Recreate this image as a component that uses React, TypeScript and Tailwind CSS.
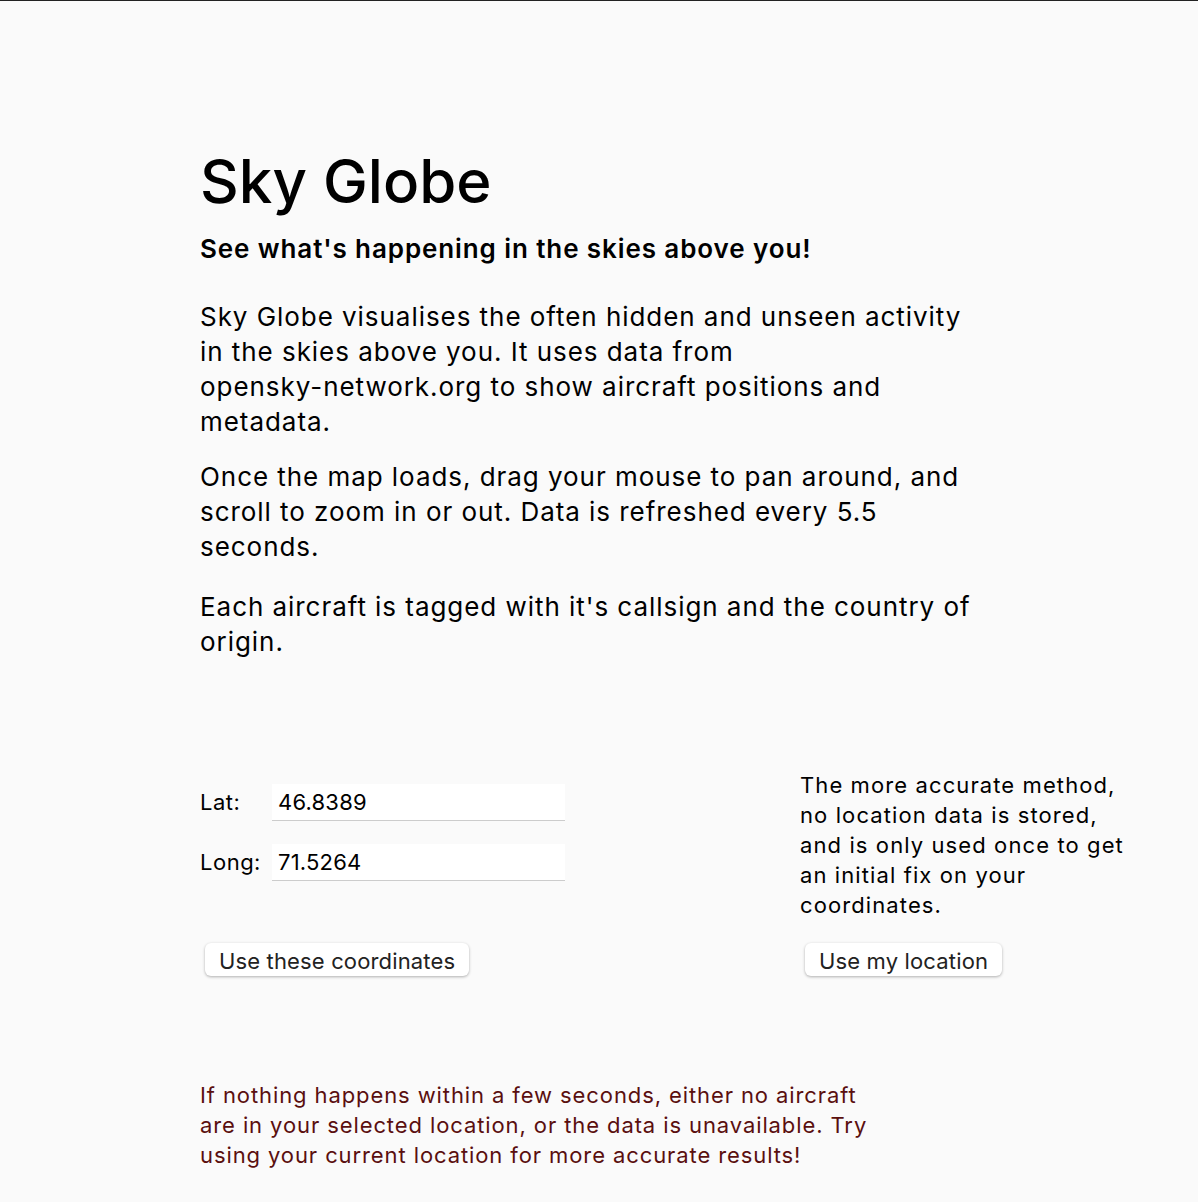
export default function App() {
  return (
    <div
      className="min-h-screen bg-[#fafafa] border-t border-[#222] text-black"
      style={{ fontFamily: "Inter, 'Noto Sans', sans-serif" }}
    >
      <div className="pl-[200px] pt-[142px]">
        <h1 className="text-[60px] leading-[76px] font-medium">Sky Globe</h1>
        <h2 className="mt-[14px] text-[26px] leading-[32px] font-semibold tracking-[0.9px]">
          See what's happening in the skies above you!
        </h2>
        <div className="mt-[34px] w-[780px] text-[26px] leading-[35px] tracking-[0.95px] space-y-[20px]">
          <p>
            Sky Globe visualises the often hidden and unseen activity in the skies above you. It uses data from{" "}
            <span className="whitespace-nowrap">opensky-network.org</span> to show aircraft positions and metadata.
          </p>
          <p>
            Once the map loads, drag your mouse to pan around, and scroll to zoom in or out. Data is refreshed every
            5.5 seconds.
          </p>
          <p className="pt-[5px]">Each aircraft is tagged with it's callsign and the country of origin.</p>
        </div>

        <div className="mt-[113px] flex">
          <div className="w-[600px] flex flex-col">
            <div className="flex flex-col gap-[23px] pt-[12px]">
              <label className="flex items-center text-[22px] tracking-[0.5px]">
                <span className="w-[72px]">Lat:</span>
                <input
                  defaultValue="46.8389"
                  className="w-[293px] h-[37px] bg-white border-b border-[#ccc] px-[6px] text-[22px] tracking-[0.2px] outline-none"
                />
              </label>
              <label className="flex items-center text-[22px] tracking-[0.5px]">
                <span className="w-[72px]">Long:</span>
                <input
                  defaultValue="71.5264"
                  className="w-[293px] h-[37px] bg-white border-b border-[#ccc] px-[6px] text-[22px] tracking-[0.2px] outline-none"
                />
              </label>
            </div>
            <div className="mt-[62px]">
              <button className="ml-[5px] h-[33px] px-[14px] pt-[3px] bg-white rounded-[6px] shadow-[0_1px_3px_rgba(0,0,0,0.3)] text-[22px] leading-none tracking-[0.15px] text-[#222]">
                Use these coordinates
              </button>
            </div>
          </div>
          <div className="flex flex-col -mt-[2px]">
            <p className="w-[330px] text-[22px] leading-[30px] tracking-[1.1px]">
              The more accurate method, no location data is stored, and is only used once to get an initial fix on
              your coordinates.
            </p>
            <div className="mt-[23px]">
              <button className="ml-[5px] h-[33px] px-[14px] pt-[3px] bg-white rounded-[6px] shadow-[0_1px_3px_rgba(0,0,0,0.3)] text-[22px] leading-none tracking-[0.15px] text-[#222]">
                Use my location
              </button>
            </div>
          </div>
        </div>

        <p className="mt-[104px] w-[680px] text-[22px] leading-[30px] text-[#5a0f0f] tracking-[0.9px] pb-[20px]">
          If nothing happens within a few seconds, either no aircraft are in your selected location, or the data is
          unavailable. Try using your current location for more accurate results!
        </p>
      </div>
    </div>
  );
}
